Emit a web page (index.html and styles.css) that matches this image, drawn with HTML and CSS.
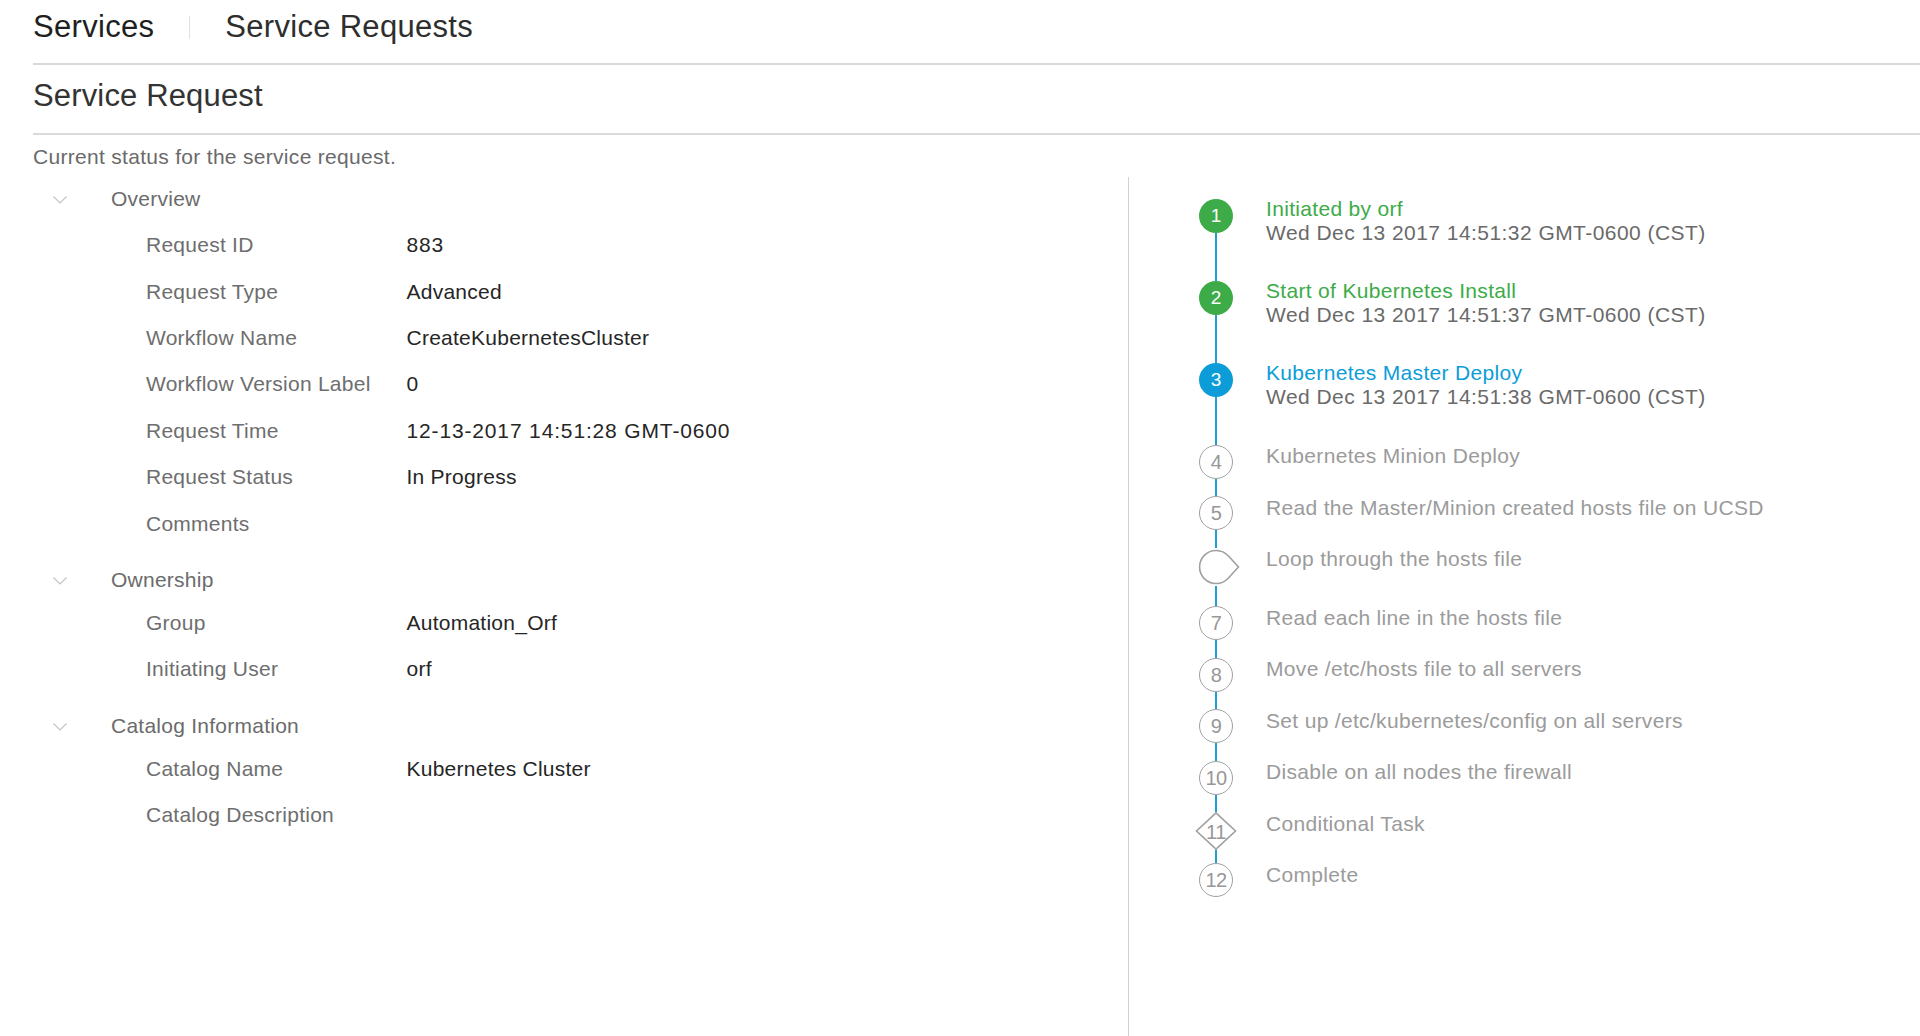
FILE: index.html
```html
<!DOCTYPE html>
<html lang="en">
<head>
<meta charset="utf-8">
<title>Service Request</title>
<link rel="stylesheet" href="styles.css">
</head>
<body>
<div class="page">
  <nav class="tabs">
    <span class="tab">Services</span>
    <span class="tab-sep"></span>
    <span class="tab tab-current">Service Requests</span>
  </nav>
  <header class="title-bar"><h1>Service Request</h1></header>
  <p class="desc">Current status for the service request.</p>
  <main class="main">
    <section class="details">
      <div class="group group-first">
        <div class="group-head">
          <svg class="chev" width="14" height="8" viewBox="0 0 14 8"><path d="M0.5 0.5 L7 7 L13.5 0.5" fill="none" stroke="#c4c4c4" stroke-width="1.2"/></svg>
          <span>Overview</span>
        </div>
        <dl class="rows">
          <div class="row"><dt>Request ID</dt><dd class="num">883</dd></div>
          <div class="row"><dt>Request Type</dt><dd>Advanced</dd></div>
          <div class="row"><dt>Workflow Name</dt><dd>CreateKubernetesCluster</dd></div>
          <div class="row"><dt>Workflow Version Label</dt><dd class="num">0</dd></div>
          <div class="row"><dt>Request Time</dt><dd class="num">12-13-2017 14:51:28 GMT-0600</dd></div>
          <div class="row"><dt>Request Status</dt><dd>In Progress</dd></div>
          <div class="row"><dt>Comments</dt><dd></dd></div>
        </dl>
      </div>
      <div class="group">
        <div class="group-head">
          <svg class="chev" width="14" height="8" viewBox="0 0 14 8"><path d="M0.5 0.5 L7 7 L13.5 0.5" fill="none" stroke="#c4c4c4" stroke-width="1.2"/></svg>
          <span>Ownership</span>
        </div>
        <dl class="rows">
          <div class="row"><dt>Group</dt><dd>Automation_Orf</dd></div>
          <div class="row"><dt>Initiating User</dt><dd>orf</dd></div>
        </dl>
      </div>
      <div class="group">
        <div class="group-head">
          <svg class="chev" width="14" height="8" viewBox="0 0 14 8"><path d="M0.5 0.5 L7 7 L13.5 0.5" fill="none" stroke="#c4c4c4" stroke-width="1.2"/></svg>
          <span>Catalog Information</span>
        </div>
        <dl class="rows">
          <div class="row"><dt>Catalog Name</dt><dd>Kubernetes Cluster</dd></div>
          <div class="row"><dt>Catalog Description</dt><dd></dd></div>
        </dl>
      </div>
    </section>

    <section class="timeline">
      <ol class="steps">
        <li class="step done">
          <div class="marker"><span class="dot">1</span><span class="line"></span></div>
          <div class="body"><div class="title">Initiated by orf</div><div class="date">Wed Dec 13 2017 14:51:32 GMT-0600 (CST)</div></div>
        </li>
        <li class="step done">
          <div class="marker"><span class="dot">2</span><span class="line"></span></div>
          <div class="body"><div class="title">Start of Kubernetes Install</div><div class="date">Wed Dec 13 2017 14:51:37 GMT-0600 (CST)</div></div>
        </li>
        <li class="step done active">
          <div class="marker"><span class="dot">3</span><span class="line"></span></div>
          <div class="body"><div class="title">Kubernetes Master Deploy</div><div class="date">Wed Dec 13 2017 14:51:38 GMT-0600 (CST)</div></div>
        </li>
        <li class="step pend">
          <div class="marker"><span class="dot">4</span><span class="line"></span></div>
          <div class="body"><div class="title">Kubernetes Minion Deploy</div></div>
        </li>
        <li class="step pend">
          <div class="marker"><span class="dot">5</span><span class="line"></span></div>
          <div class="body"><div class="title">Read the Master/Minion created hosts file on UCSD</div></div>
        </li>
        <li class="step pend loop">
          <div class="marker">
            <svg class="shape" width="34" height="38" viewBox="0 0 34 38"><path d="M29.2 7.8 A16.5 16.5 0 1 0 29.2 30.2 L39.5 19 Z" fill="#fff" stroke="#a0a0a0" stroke-width="1.6"/></svg>
            <span class="line"></span>
          </div>
          <div class="body"><div class="title">Loop through the hosts file</div></div>
        </li>
        <li class="step pend">
          <div class="marker"><span class="dot">7</span><span class="line"></span></div>
          <div class="body"><div class="title">Read each line in the hosts file</div></div>
        </li>
        <li class="step pend">
          <div class="marker"><span class="dot">8</span><span class="line"></span></div>
          <div class="body"><div class="title">Move /etc/hosts file to all servers</div></div>
        </li>
        <li class="step pend">
          <div class="marker"><span class="dot">9</span><span class="line"></span></div>
          <div class="body"><div class="title">Set up /etc/kubernetes/config on all servers</div></div>
        </li>
        <li class="step pend">
          <div class="marker"><span class="dot">10</span><span class="line"></span></div>
          <div class="body"><div class="title">Disable on all nodes the firewall</div></div>
        </li>
        <li class="step pend cond">
          <div class="marker">
            <svg class="shape" width="34" height="38" viewBox="0 0 34 38"><polygon points="17,0.8 36.5,19 17,37.2 -2.5,19" fill="#fff" stroke="#a0a0a0" stroke-width="1.6"/><text x="17" y="26.5" text-anchor="middle" class="shape-num">11</text></svg>
            <span class="line"></span>
          </div>
          <div class="body"><div class="title">Conditional Task</div></div>
        </li>
        <li class="step pend last">
          <div class="marker"><span class="dot">12</span></div>
          <div class="body"><div class="title">Complete</div></div>
        </li>
      </ol>
    </section>
  </main>
</div>
</body>
</html>
```

FILE: styles.css
```css
html, body {
  margin: 0;
  padding: 0;
  background: #ffffff;
}

body {
  font-family: "Liberation Sans", Arial, sans-serif;
  color: #333333;
  letter-spacing: 0.25px;
}

.page {
  padding-left: 33px;
}

/* top tabs */
.tabs {
  display: flex;
  align-items: center;
  height: 36px;
  padding: 9px 0 18px;
  border-bottom: 2px solid #d9d9d9;
}

.tab {
  font-size: 31px;
  line-height: 36px;
  color: #1f1f1f;
  letter-spacing: 0.3px;
}

.tab-current {
  color: #2e2e2e;
}

.tab-sep {
  width: 1px;
  height: 23px;
  background: #e0e0e0;
  margin: 0 35px 0 35px;
}

/* title */
.title-bar {
  padding: 12.5px 0 19.5px;
  border-bottom: 2px solid #d9d9d9;
}

.title-bar h1 {
  margin: 0;
  font-size: 31px;
  line-height: 36px;
  font-weight: normal;
  color: #333333;
  letter-spacing: 0.15px;
}

.desc {
  margin: 10px 0 0;
  font-size: 21px;
  line-height: 24px;
  color: #6a6a6a;
  letter-spacing: 0.3px;
}

/* main area */
.main {
  display: flex;
  margin-top: 8px;
  min-height: 859px;
}

.details {
  flex: 0 0 1096px;
  box-sizing: border-box;
  padding-top: 1.5px;
  border-right: 1px solid #d2d2d2;
}

.group + .group {
  margin-top: 13px;
}

.group-head {
  display: flex;
  align-items: center;
  height: 40px;
  font-size: 21px;
  color: #6b6b6b;
}

.chev {
  flex: none;
  margin: 3px 44px 0 20px;
}

.rows {
  margin: 0;
}

.group-first .rows {
  margin-top: 3.5px;
}

.row {
  display: flex;
  align-items: center;
  height: 46.4px;
  font-size: 21px;
}

.row dt {
  flex: 0 0 260.5px;
  padding-left: 113px;
  color: #6e6e6e;
}

.row dd {
  margin: 0;
  color: #262626;
}

.row dd.num {
  letter-spacing: 0.85px;
}

/* timeline */
.timeline {
  flex: 1;
  padding: 21.5px 0 0 70px;
}

.steps {
  list-style: none;
  margin: 0;
  padding: 0;
}

.step {
  display: flex;
}

.step.done { height: 82px; }
.step.pend { height: 51.5px; }
.step.loop { height: 58.5px; }
.step.cond { height: 51.4px; }
.step.last { height: auto; }

.marker {
  flex: 0 0 34px;
  display: flex;
  flex-direction: column;
  align-items: center;
}

.dot {
  flex: none;
  box-sizing: border-box;
  width: 34px;
  height: 34px;
  border-radius: 50%;
  display: flex;
  align-items: center;
  justify-content: center;
  font-size: 19px;
  line-height: 1;
  letter-spacing: 0;
}

.done .dot {
  background: #3dab48;
  color: #ffffff;
}

.done.active .dot {
  background: #0c9dd9;
}

.pend .dot {
  background: #ffffff;
  border: 1.6px solid #a0a0a0;
  color: #979797;
  font-size: 20px;
  letter-spacing: -0.5px;
}

.shape {
  flex: none;
  overflow: visible;
  display: block;
}

.shape-num {
  font-family: "Liberation Sans", Arial, sans-serif;
  font-size: 20px;
  fill: #979797;
  letter-spacing: -0.5px;
}

.line {
  flex: 1;
  width: 2px;
  background: #1e9fd8;
}

.body {
  margin-left: 33px;
  font-size: 21px;
  line-height: 24.5px;
  white-space: nowrap;
  letter-spacing: 0.32px;
}

.done .body { margin-top: -2px; }
.pend .body { margin-top: -0.5px; }

.title {
  color: #3dab48;
}

.done.active .title {
  color: #0c9dd9;
}

.date {
  color: #6a6a6a;
  letter-spacing: 0.45px;
}

.pend .title {
  color: #9b9b9b;
}
```
